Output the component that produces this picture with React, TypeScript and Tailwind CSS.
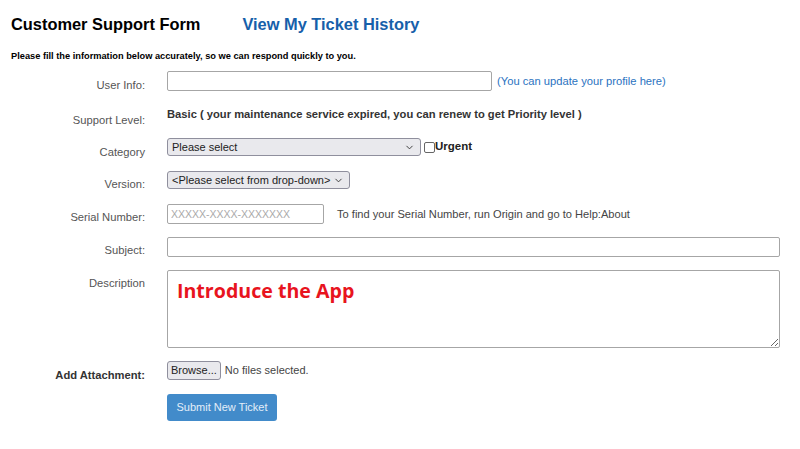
import { ChevronDown } from "lucide-react";

const font = "font-['Liberation_Sans',Arial,sans-serif]";

function Label({ children, bold, pt = "pt-[7px]" }: { children: React.ReactNode; bold?: boolean; pt?: string }) {
  return (
    <div
      className={`w-[145px] shrink-0 text-right text-[11.2px] leading-[13px] ${pt} ${
        bold ? "font-bold text-[#333]" : "text-[#555]"
      }`}
    >
      {children}
    </div>
  );
}

function Select({ width, children }: { width: string; children: React.ReactNode }) {
  return (
    <div
      className={`${width} h-[18px] flex items-center justify-between whitespace-nowrap rounded-[3px] border border-[#8f8f9d] bg-[#e9e9ed] pl-[4px] pr-[5px] text-[11px] text-[#222]`}
    >
      <span>{children}</span>
      <ChevronDown size={11} strokeWidth={2} className="text-[#333]" />
    </div>
  );
}

export default function App() {
  return (
    <div className={`${font} w-[800px] h-[449px] bg-white relative overflow-hidden`}>
      <div className="flex items-baseline pl-[11px] pt-[14px]">
        <h1 className="text-[16.4px] font-bold text-black leading-[20px]">Customer Support Form</h1>
        <a className="ml-[42px] text-[16.4px] font-bold text-[#1660aa] leading-[20px]">View My Ticket History</a>
      </div>
      <p className="pl-[11px] mt-[16px] text-[9.25px] font-bold text-black leading-[12px]">
        Please fill the information below accurately, so we can respond quickly to you.
      </p>

      <div className="flex flex-col">
        {/* User Info */}
        <div className="flex items-start gap-[22px] mt-[9px]">
          <Label pt="pt-[8px]">User Info:</Label>
          <div className="flex items-center">
            <input className="w-[325px] h-[20px] rounded-[2px] border border-[#a6a6a6] bg-white" />
            <a className="ml-[5px] text-[11.2px] text-[#2b73bf]">(You can update your profile here)</a>
          </div>
        </div>

        {/* Support level */}
        <div className="flex items-start gap-[22px] mt-[15px]">
          <Label pt="pt-[7px]">Support Level:</Label>
          <div className="text-[11.2px] font-bold text-[#333] leading-[14px]">
            Basic ( your maintenance service expired, you can renew to get Priority level )
          </div>
        </div>

        {/* Category */}
        <div className="flex items-start gap-[22px] mt-[11px]">
          <Label pt="pt-[8px]">Category</Label>
          <div className="flex items-center">
            <Select width="w-[254px]">Please select</Select>
            <span className="ml-[3px] w-[11px] h-[11px] rounded-[2px] border border-[#666] bg-white" />
            <span className="text-[11.5px] font-bold text-[#222]">Urgent</span>
          </div>
        </div>

        {/* Version */}
        <div className="flex items-start gap-[22px] mt-[12px]">
          <Label pt="pt-[7px]">Version:</Label>
          <Select width="w-[183px]">&lt;Please select from drop-down&gt;</Select>
        </div>

        {/* Serial */}
        <div className="flex items-start gap-[22px] mt-[13px]">
          <Label pt="pt-[7px]">Serial Number:</Label>
          <div className="flex items-center">
            <input
              placeholder="XXXXX-XXXX-XXXXXXX"
              className="w-[157px] h-[20px] rounded-[2px] border border-[#a6a6a6] px-[3px] text-[10.5px] placeholder:text-[#aaa]"
            />
            <span className="ml-[13px] text-[11.1px] text-[#444]">
              To find your Serial Number, run Origin and go to Help:About
            </span>
          </div>
        </div>

        {/* Subject */}
        <div className="flex items-start gap-[22px] mt-[13px]">
          <Label pt="pt-[7px]">Subject:</Label>
          <input className="w-[613px] h-[20px] rounded-[2px] border border-[#a6a6a6] bg-white" />
        </div>

        {/* Description */}
        <div className="flex items-start gap-[22px] mt-[13px]">
          <Label pt="pt-[7px]">Description</Label>
          <textarea
            readOnly
            value="Introduce the App"
            className="w-[613px] h-[78px] rounded-[2px] border border-[#a6a6a6] bg-white pl-[9px] pt-[6px] font-['Open_Sans',sans-serif] text-[19.6px] font-bold leading-[28px] text-[#e8141e] outline-none"
          />
        </div>

        {/* Attachment */}
        <div className="flex items-start gap-[22px] mt-[13px]">
          <Label bold pt="pt-[8px]">Add Attachment:</Label>
          <div className="flex items-center">
            <button className="h-[19px] rounded-[3px] border border-[#8f8f9d] bg-[#e9e9ed] px-[3px] text-[11px] text-[#222]">
              Browse...
            </button>
            <span className="ml-[4px] text-[11px] text-[#444]">No files selected.</span>
          </div>
        </div>

        {/* Submit */}
        <div className="flex items-start gap-[22px] mt-[12px]">
          <div className="w-[145px] shrink-0" />
          <button className="w-[110px] h-[27px] rounded-[3px] bg-[#428bca] text-[11px] text-[#e3eef9]">
            Submit New Ticket
          </button>
        </div>
      </div>
    </div>
  );
}
